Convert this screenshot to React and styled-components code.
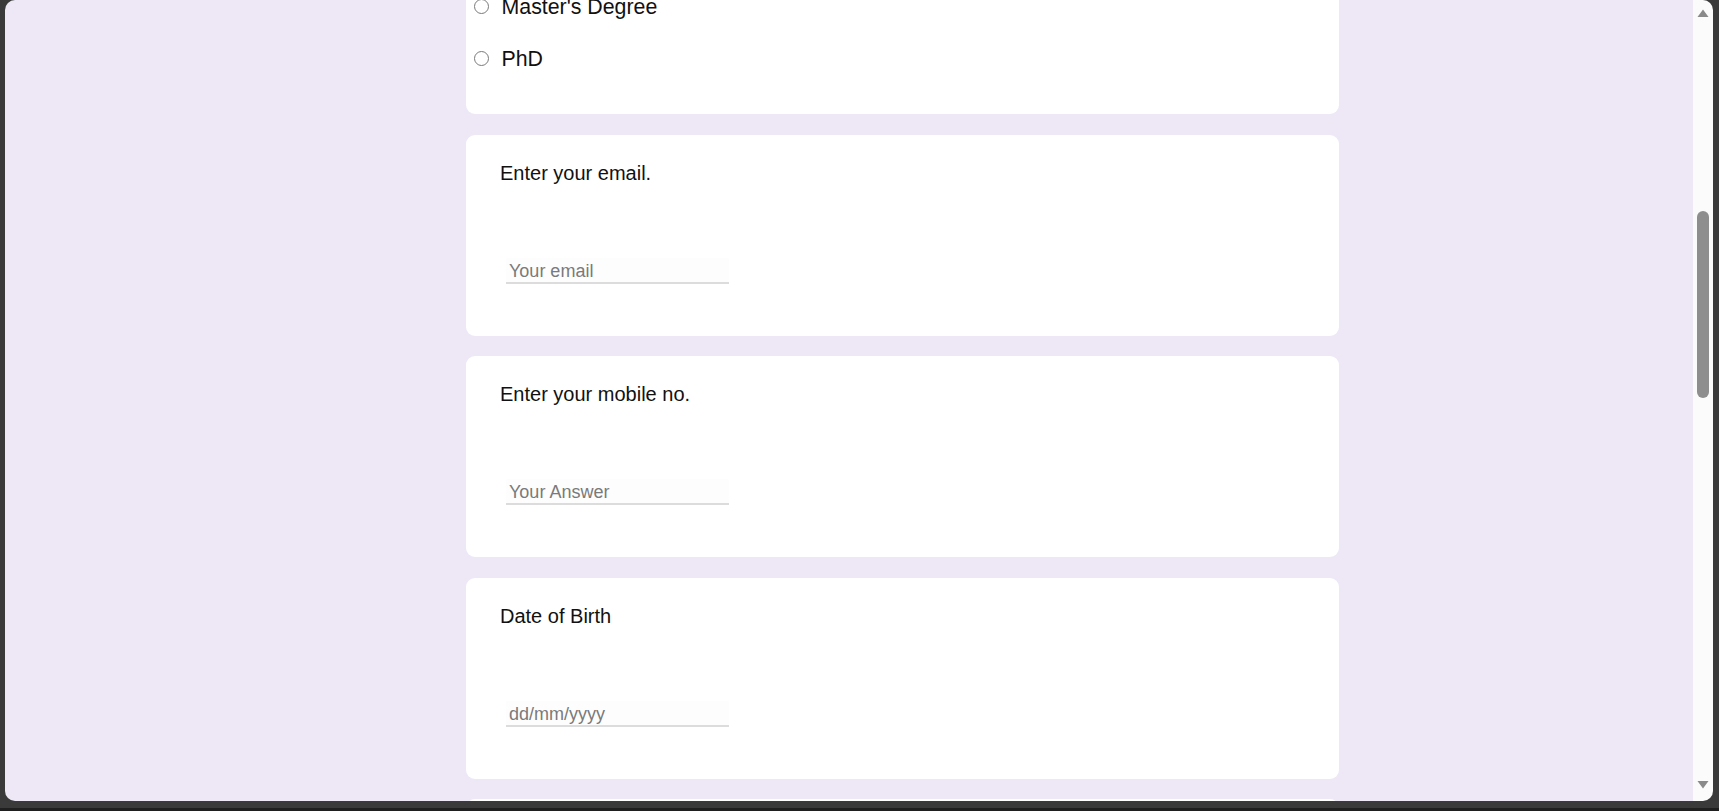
import React, { useLayoutEffect, useRef } from 'react';
import styled, { createGlobalStyle } from 'styled-components';

const GlobalStyle = createGlobalStyle`
  html, body {
    margin: 0;
    padding: 0;
  }
  body {
    font-family: "Liberation Sans", Arial, sans-serif;
    background: #3a3a3a;
    overflow: hidden;
  }
`;

const Screen = styled.div`
  height: 811px;
  box-sizing: border-box;
  display: flex;
  padding: 0 6px 7px 5px;
  background: #3a3a3a;
  border-bottom: 3px solid #1f1f1f;
`;

const Frame = styled.div`
  flex: 1;
  display: flex;
  border-radius: 10px;
  overflow: hidden;
`;

const Viewport = styled.div`
  flex: 1;
  overflow: hidden;
  background: #ede7f6;
`;

const Form = styled.form`
  display: flex;
  flex-direction: column;
  gap: 20.5px;
  width: 873px;
  margin: 0;
  padding: 20px 0 60px 461px;
`;

const Card = styled.div`
  background: #fff;
  border-radius: 9px;
  padding: 27px 0 ${p => p.$bottom || 29}px;
`;

const Title = styled.h1`
  margin: 0 34px 10px;
  font-size: 32px;
  font-weight: normal;
  color: #111;
`;

const Question = styled.div`
  padding: 0 34px;
  font-size: 20px;
  line-height: 23px;
  color: #111;
`;

const AnswerInput = styled.input`
  display: block;
  box-sizing: border-box;
  width: 223px;
  height: 26px;
  margin: 73px 0 0 40px;
  padding: 3px 3px 0;
  border: none;
  border-bottom: 2px solid #dcdcdc;
  background: #fdfdfd;
  font-family: "Liberation Sans", Arial, sans-serif;
  font-size: 18px;
  color: #222;
  outline: none;
  &::placeholder {
    color: #7a7a7a;
  }
`;

const OptionList = styled.div`
  display: flex;
  flex-direction: column;
  margin-top: 12px;
`;

const Option = styled.label`
  display: flex;
  align-items: center;
  padding: 14px 0 14px 7.5px;
  font-size: 21.33px;
  line-height: 24px;
  color: #111;
`;

const Radio = styled.input`
  appearance: none;
  width: 15px;
  height: 15px;
  margin: 0 13px 2px 0;
  border: 1px solid #7a7a7a;
  border-radius: 50%;
  background: #fff;
  flex: none;
`;

const Scrollbar = styled.div`
  width: 20px;
  background: #fbfbfb;
  display: flex;
  flex-direction: column;
  align-items: center;
`;

const ArrowButton = styled.div`
  display: flex;
  justify-content: center;
  padding: ${p => (p.$down ? '0 0 12px' : '9px 0 0')};
`;

const Track = styled.div`
  flex: 1;
`;

const Thumb = styled.div`
  width: 12px;
  height: 187px;
  margin-top: ${p => p.$offset}px;
  border-radius: 6px;
  background: #8e8e8e;
`;

const Arrow = ({ down }) => (
  <svg width="12" height="8" viewBox="0 0 12 8">
    <polygon
      points={down ? '0.5,0 11.5,0 6,7.5' : '6,0.5 11.5,8 0.5,8'}
      fill="#8a8a8a"
      strokeLinejoin="round"
    />
  </svg>
);

const qualifications = ['High School', "Bachelor's Degree", "Master's Degree", 'PhD'];

const questions = [
  { id: 'email', label: 'Enter your email.', placeholder: 'Your email', type: 'email' },
  { id: 'mobile', label: 'Enter your mobile no.', placeholder: 'Your Answer', type: 'tel' },
  { id: 'dob', label: 'Date of Birth', placeholder: 'dd/mm/yyyy', type: 'text' },
  { id: 'address', label: 'Enter your address.', placeholder: 'Your Answer', type: 'text' },
];

export default function App() {
  const viewRef = useRef(null);
  const anchorRef = useRef(null);

  // the page is shown scrolled so that the email card sits 135px from the top
  useLayoutEffect(() => {
    const v = viewRef.current;
    const c = anchorRef.current;
    if (!v || !c) return;
    v.scrollTop = c.getBoundingClientRect().top - v.getBoundingClientRect().top + v.scrollTop - 135;
  }, []);

  return (
    <>
      <GlobalStyle />
      <Screen>
        <Frame>
          <Viewport ref={viewRef}>
            <Form onSubmit={e => e.preventDefault()}>
              <Card>
                <Title>Registration Form</Title>
                <Question>Please fill in your details.</Question>
              </Card>
              <Card $bottom={52}>
                <Question>Enter your name.</Question>
                <AnswerInput type="text" placeholder="Your Answer" />
              </Card>
              <Card>
                <Question>Highest Qualification</Question>
                <OptionList>
                  {qualifications.map(q => (
                    <Option key={q}>
                      <Radio type="radio" name="qualification" value={q} />
                      {q}
                    </Option>
                  ))}
                </OptionList>
              </Card>
              {questions.map((q, i) => (
                <Card key={q.id} $bottom={52} ref={i === 0 ? anchorRef : undefined}>
                  <Question>{q.label}</Question>
                  <AnswerInput type={q.type} placeholder={q.placeholder} />
                </Card>
              ))}
            </Form>
          </Viewport>
          <Scrollbar>
            <ArrowButton>
              <Arrow />
            </ArrowButton>
            <Track>
              <Thumb $offset={194} />
            </Track>
            <ArrowButton $down>
              <Arrow down />
            </ArrowButton>
          </Scrollbar>
        </Frame>
      </Screen>
    </>
  );
}
